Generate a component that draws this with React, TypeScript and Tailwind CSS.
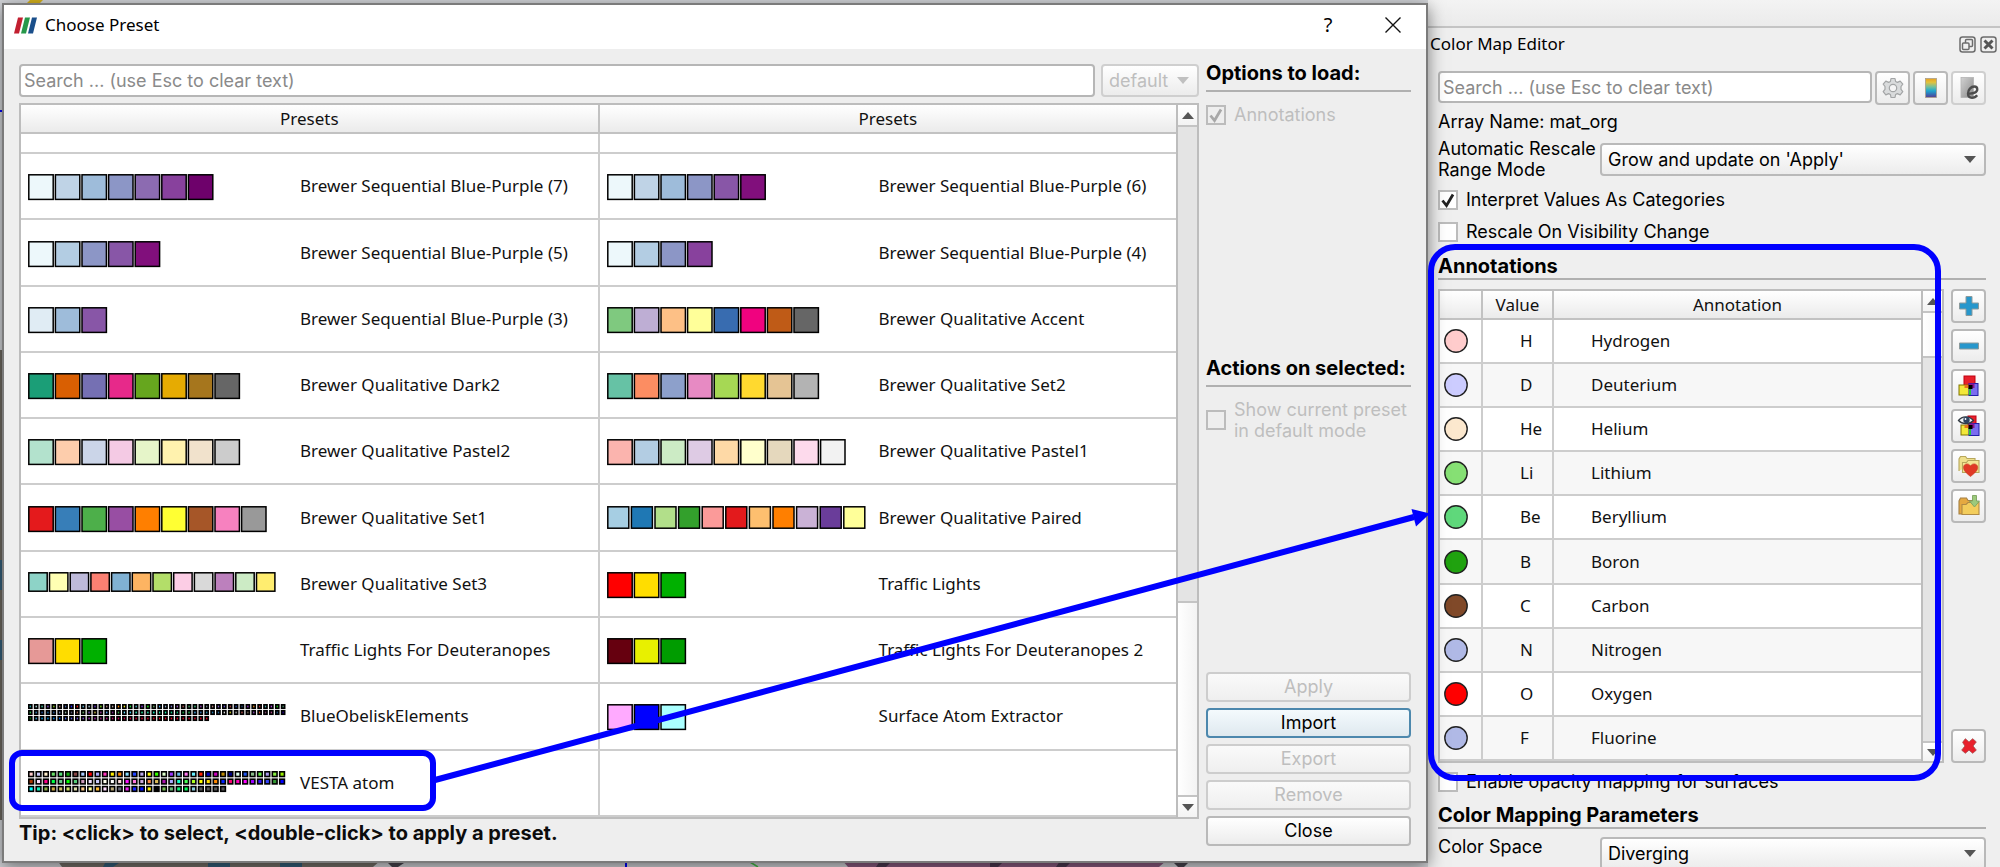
import React from "react";

type Palette = { colors: string[]; w: number; h: number; stepX: number; stepY?: number; perRow?: number; line?: number };
type Preset = { name: string; palette: Palette };

const large = (list: string): Palette => ({ colors: list.split(" "), w: 24.4, h: 24.6, stepX: 26.6 });
const sized = (list: string, w: number, h: number, stepX: number): Palette => ({ colors: list.split(" "), w, h, stepX });

const obelisk =
  "#2aa #bee #4ca #85c #8c2 #a77 #46a #22f #f22 #6bd #acd #63c #8e2 #b88 #a99 #f80 #ee2 #2e4 #5cd #83e #2f2 #6a6 #4ae #8ac #77c #a6c #a55 #4a6 #4c8 #94b #789 #a77 #86c #65c #b44 #35b #247 #93c #d82 #a33 #4aa #a4d #2c2 #486";
const obelisk2 =
  "#2b4 #38b #25a #16a #259 #78b #8a9 #557 #a65 #6a6 #84c #cb4 #939 #5af #728 #3a4 #6df #4df #3fc #2fa #2fb #1fc #2da #1ea #1c8 #1b7 #1a4 #2b5 #4ae #37b #28a #27a #269 #ddd #cc2 #aaa #b55 #765 #84a #c52 #746 #a48 #258 #208";
const obelisk3 =
  "#070 #3ad #0af #09e #08f #06e #46e #55d #75d #84d #a3c #a2b #a28 #b18 #b06 #c05 #c04 #d04 #d03 #e03 #e02 #e02 #e02 #e02 #e02 #e02 #e02 #e02 #e02 #e02 #e02";

const vesta =
  "#fcc #ccf #fec #6d6 #5d7 #1a1 #844 #acf #f00 #aaf #f3b #fe0 #f80 #8df #24f #bae #ff0 #3f0 #dfc #93f #6be #f7e #6ef #f20 #00c #c0b #b80 #008 #dfe #25e #8b8 #6e4 #a9e #8e4 #9e0" +
  " #a30 #fdf #f08 #0f4 #6c8 #0f0 #5c7 #c9b #edf #ccf #ffe #fff #fdd #f1f #f7d #cad #f84 #db5 #a1a #aaf #1fc #4f5 #af2 #ff0 #fd0 #f80 #02f #f07 #f0b #f0f #90f #31f #34f #393 #00f" +
  " #0ff #1eb #8a4 #ca4 #cb6 #cd6 #dda #fc8 #ff9 #fb3 #fdf #ba7 #667 #e2e #12f #01f #fe0 #000 #7b5 #6b7 #1e7 #0f5 #8cd #555 #555 #555 #555";

const obeliskPalette: Palette = {
  colors: `${obelisk} ${obelisk2} ${obelisk3}`.split(" "),
  w: 3, h: 3.4, stepX: 5.88, stepY: 6, perRow: 44, line: 1.7,
};
const vestaPalette: Palette = { colors: vesta.split(" "), w: 4.7, h: 4.7, stepX: 7.38, stepY: 7.4, perRow: 35, line: 1.6 };

const rows: [Preset, Preset | null][] = [
  [
    { name: "Brewer Sequential Blue-Purple (7)", palette: large("#edf8fb #bfd3e6 #9ebcda #8c96c6 #8c6bb1 #88419d #6e016b") },
    { name: "Brewer Sequential Blue-Purple (6)", palette: large("#edf8fb #bfd3e6 #9ebcda #8c96c6 #8856a7 #810f7c") },
  ],
  [
    { name: "Brewer Sequential Blue-Purple (5)", palette: large("#edf8fb #b3cde3 #8c96c6 #8856a7 #810f7c") },
    { name: "Brewer Sequential Blue-Purple (4)", palette: large("#edf8fb #b3cde3 #8c96c6 #88419d") },
  ],
  [
    { name: "Brewer Sequential Blue-Purple (3)", palette: large("#e0ecf4 #9ebcda #8856a7") },
    { name: "Brewer Qualitative Accent", palette: large("#7fc97f #beaed4 #fdc086 #ffff99 #386cb0 #f0027f #bf5b17 #666666") },
  ],
  [
    { name: "Brewer Qualitative Dark2", palette: large("#1b9e77 #d95f02 #7570b3 #e7298a #66a61e #e6ab02 #a6761d #666666") },
    { name: "Brewer Qualitative Set2", palette: large("#66c2a5 #fc8d62 #8da0cb #e78ac3 #a6d854 #ffd92f #e5c494 #b3b3b3") },
  ],
  [
    { name: "Brewer Qualitative Pastel2", palette: large("#b3e2cd #fdcdac #cbd5e8 #f4cae4 #e6f5c9 #fff2ae #f1e2cc #cccccc") },
    { name: "Brewer Qualitative Pastel1", palette: large("#fbb4ae #b3cde3 #ccebc5 #decbe4 #fed9a6 #ffffcc #e5d8bd #fddaec #f2f2f2") },
  ],
  [
    { name: "Brewer Qualitative Set1", palette: large("#e41a1c #377eb8 #4daf4a #984ea3 #ff7f00 #ffff33 #a65628 #f781bf #999999") },
    { name: "Brewer Qualitative Paired", palette: sized("#a6cee3 #1f78b4 #b2df8a #33a02c #fb9a99 #e31a1c #fdbf6f #ff7f00 #cab2d6 #6a3d9a #ffff99", 21, 21.4, 23.6) },
  ],
  [
    { name: "Brewer Qualitative Set3", palette: sized("#8dd3c7 #ffffb3 #bebada #fb8072 #80b1d3 #fdb462 #b3de69 #fccde5 #d9d9d9 #bc80bd #ccebc5 #ffed6f", 18.4, 18.4, 20.7) },
    { name: "Traffic Lights", palette: large("#ff0000 #ffdd00 #00b000") },
  ],
  [
    { name: "Traffic Lights For Deuteranopes", palette: large("#e69997 #ffdd00 #00b000") },
    { name: "Traffic Lights For Deuteranopes 2", palette: large("#66000f #e8f000 #009c00") },
  ],
  [
    { name: "BlueObeliskElements", palette: obeliskPalette },
    { name: "Surface Atom Extractor", palette: large("#ffaaff #0000ff #aaffff") },
  ],
  [{ name: "VESTA atom", palette: vestaPalette }, null],
];

const elements = [
  ["H", "Hydrogen", "#ffcccc"],
  ["D", "Deuterium", "#ccccff"],
  ["He", "Helium", "#fce8ce"],
  ["Li", "Lithium", "#86e074"],
  ["Be", "Beryllium", "#5fd87b"],
  ["B", "Boron", "#20a20f"],
  ["C", "Carbon", "#804929"],
  ["N", "Nitrogen", "#b0b9e6"],
  ["O", "Oxygen", "#ff0000"],
  ["F", "Fluorine", "#b0b9e6"],
];

const dense = "font-['Inter','Noto_Sans_CJK_KR',sans-serif] text-[18px]";
const heading = "font-['Inter','Noto_Sans_CJK_KR',sans-serif] text-[20px] font-bold";
const field = "rounded-[4px] border-2 border-[#b6b6b6] bg-white";
const raised = "rounded-[4px] border-2 border-[#b9b9b9] bg-linear-to-b from-white to-[#ececec]";

function Swatches({ palette }: { palette: Palette }) {
  const { colors, w, h, stepX, stepY = 0, perRow = 99, line = 1.5 } = palette;
  return (
    <svg width="262" height="28" className="block" aria-hidden="true">
      {colors.map((c, i) => (
        <rect
          key={i}
          x={0.8 + (i % perRow) * stepX}
          y={0.8 + Math.floor(i / perRow) * stepY}
          width={w}
          height={h}
          fill={c}
          stroke="#000"
          strokeWidth={line}
        />
      ))}
    </svg>
  );
}

function PresetCell({ preset, last }: { preset: Preset | null; last?: boolean }) {
  return (
    <td className={`h-[66px] border-b-2 border-[#cdcdcd] p-0 ${last ? "" : "border-r-2"}`}>
      {preset && (
        <div className="flex h-[64px] items-center pl-[7px]">
          <div className="w-[272px] self-start pt-[20px]">
            <Swatches palette={preset.palette} />
          </div>
          <span className="whitespace-nowrap">{preset.name}</span>
        </div>
      )}
    </td>
  );
}

function Arrow({ up, className = "" }: { up?: boolean; className?: string }) {
  return (
    <svg viewBox="0 0 12 7" className={`h-[7px] w-[12px] ${className}`} aria-hidden="true">
      <path d={up ? "M0 7 6 0l6 7z" : "M0 0h12L6 7z"} fill="currentColor" />
    </svg>
  );
}

function ScrollBar({ thumb }: { thumb: "top" | "bottom" }) {
  const cap = "flex h-[20px] shrink-0 items-center justify-center bg-linear-to-b from-white to-[#f3f3f3] text-[#555]";
  const bar = <div className={`border-y-2 border-[#c4c4c4] bg-linear-to-r from-white to-[#f3f3f3] ${thumb === "top" ? "h-[47px]" : "h-[196px]"}`} />;
  return (
    <div className="flex w-[21px] shrink-0 flex-col border-l-2 border-[#bdbdbd] bg-[#e4e4e4]">
      <div className={cap}><Arrow up /></div>
      {thumb === "top" && bar}
      <div className={`flex-1 ${thumb === "top" ? "" : "border-t-2 border-[#c4c4c4]"}`} />
      {thumb === "bottom" && bar}
      <div className={`${cap} ${thumb === "top" ? "border-t-2 border-[#c4c4c4]" : ""}`}><Arrow /></div>
    </div>
  );
}

function Check({ label, checked, disabled, multiline }: { label: React.ReactNode; checked?: boolean; disabled?: boolean; multiline?: boolean }) {
  return (
    <label className={`flex items-center gap-2 whitespace-nowrap ${dense} ${multiline ? "leading-[21px]" : "h-[20px] leading-[20px]"} ${disabled ? "text-[#bebebe]" : "text-black"}`}>
      <span className="relative block size-[20px] shrink-0">
        <input
          type="checkbox"
          defaultChecked={checked}
          disabled={disabled}
          className={`block size-[20px] appearance-none border-2 border-[#bcbcbc] ${disabled ? "bg-[#eee]" : "bg-white"}`}
        />
        {checked && (
          <svg viewBox="0 0 20 20" className="pointer-events-none absolute inset-0 size-[20px]" aria-hidden="true">
            <path d="M4.5 10.5 8.5 15.500 15 4.500" fill="none" stroke={disabled ? "#a8a8a8" : "#222"} strokeWidth="2.800" />
          </svg>
        )}
      </span>
      <span>{label}</span>
    </label>
  );
}

function Select({ id, value, label, disabled, className = "" }: { id: string; value: string; label?: string; disabled?: boolean; className?: string }) {
  return (
    <div className={`relative ${className}`}>
      <select
        id={id}
        aria-label={label}
        disabled={disabled}
        className={`block h-[33px] w-full appearance-none pl-[6px] ${raised} ${dense} ${disabled ? "border-[#cfcfcf] text-[#bebebe] opacity-100" : "text-black"}`}
      >
        <option>{value}</option>
      </select>
      <Arrow className={`pointer-events-none absolute top-[13px] right-[10px] ${disabled ? "text-[#c0c0c0]" : "text-[#555]"}`} />
    </div>
  );
}

function Section({ children, roomy }: { children: React.ReactNode; roomy?: boolean }) {
  return (
    <h2 className={`border-b-2 border-[#b0b0b0] leading-[24px] whitespace-nowrap text-black ${roomy ? "pb-[5px]" : ""} ${heading}`}>{children}</h2>
  );
}

function DialogButton({ children, disabled, focus }: { children: string; disabled?: boolean; focus?: boolean }) {
  return (
    <button
      type="button"
      disabled={disabled}
      className={`h-[30px] w-full rounded-[4px] border-2 leading-[24px] ${dense} ${
        focus
          ? "border-[#4d88ad] bg-linear-to-b from-[#f4fafd] to-[#dfe9ef] text-black"
          : disabled
            ? "border-[#cdcdcd] bg-linear-to-b from-[#fafafa] to-[#efefef] text-[#bebebe]"
            : "border-[#b9b9b9] bg-linear-to-b from-white to-[#ececec] text-black"
      }`}
    >
      {children}
    </button>
  );
}

function IconButton({ label, children, faded }: { label: string; children: React.ReactNode; faded?: boolean }) {
  return (
    <button type="button" aria-label={label} className={`flex h-[34px] w-[35px] shrink-0 items-center justify-center ${raised} ${faded ? "border-[#cfcfcf]" : ""}`}>
      {children}
    </button>
  );
}

function GearIcon() {
  return (
    <svg viewBox="0 0 24 24" className="size-[24px]">
      <g fill="#d9dbdc" stroke="#a3a5a6" strokeWidth="1.200" strokeLinejoin="round">
        <path d="M10 2.500h4l.6 3 1.800.9 2.800-1.300 2.600 3-1.800 2.400v2.800l1.800 2.400-2.600 3.200-2.900-1.300-1.700.9-.6 3h-4l-.6-3-1.800-.9-2.800 1.300-2.600-3.200L4 13.300v-2.800L2.200 8.100l2.600-3 2.900 1.300 1.700-.9z" />
        <circle cx="12" cy="12" r="3.700" fill="#f5f5f5" />
      </g>
    </svg>
  );
}

function ColorBarIcon() {
  return (
    <svg viewBox="0 0 24 24" className="size-[24px]">
      <defs>
        <linearGradient id="bar" x1="0" y1="0" x2="0" y2="1">
          <stop offset="0" stopColor="#e8a020" /><stop offset=".2" stopColor="#e3c23c" />
          <stop offset=".45" stopColor="#6fc0a0" /><stop offset=".65" stopColor="#1fa6cf" />
          <stop offset=".85" stopColor="#3868b0" /><stop offset="1" stopColor="#5c3c90" />
        </linearGradient>
      </defs>
      <rect x="6.500" y="2.500" width="11" height="19" fill="url(#bar)" stroke="#aaa08a" strokeWidth=".8" />
    </svg>
  );
}

function EditDefaultsIcon() {
  return (
    <svg viewBox="0 0 24 24" className="size-[24px]">
      <defs>
        <linearGradient id="grey" x1="0" y1="0" x2="1" y2="1">
          <stop offset="0" stopColor="#d2d2d2" /><stop offset="1" stopColor="#8a8a8a" />
        </linearGradient>
      </defs>
      <rect x="4" y="1.500" width="12.500" height="20" fill="url(#grey)" stroke="#b4b4b4" strokeWidth=".8" />
      <path d="M11.500 17.500c5 .3 8.800-1.200 8.800-4.300 0-1.700-1.100-2.700-3-2.700-3.400 0-6.300 3.300-6.300 7 0 2.700 1.500 4.300 4 4.300 2.200 0 4-1 5.200-2.600" fill="none" stroke="#4c4c4c" strokeWidth="2.300" />
    </svg>
  );
}

function Squares({ eye }: { eye?: boolean }) {
  return (
    <svg viewBox="0 0 24 24" className="size-[24px]">
      <rect x={eye ? 11 : 7} y="2" width={eye ? 8 : 11} height="12" fill="#e8202c" stroke="#c00010" />
      <rect x={eye ? 4 : 2} y="11" width="11" height="10" fill="#f2e838" stroke="#807400" />
      <rect x="12" y="9.500" width={eye ? 10 : 9} height="12" fill="#7a6cf0" stroke="#2020a8" />
      <path d="M12 14h2v7h-2z" fill="#22c83c" />
      <path d="M12 9.500h5.500V14H12z" fill="#8c1490" />
      <path d="M7.500 11h5v3h-5z" fill="#e87818" />
      <path d="M11.500 11h4v4h-4z" fill="#000" />
      {eye && (
        <g>
          <path d="M1.500 6.500C5 1.800 12 1.400 16.500 6.500c-4 4-11 4.300-15 0z" fill="#eef2f5" stroke="#333b42" strokeWidth="1.300" />
          <circle cx="9.500" cy="6" r="3.200" fill="#2c4360" />
          <circle cx="8.500" cy="5" r=".9" fill="#fff" />
        </g>
      )}
    </svg>
  );
}

function HeartFolder() {
  return (
    <svg viewBox="0 0 24 24" className="size-[24px]">
      <path d="M2 17V5l1.500-2.500h5L10 4.500h8V8" fill="#efe08c" stroke="#b7a75c" strokeWidth="1.100" />
      <path d="M5.500 18.500V8.500h4l1.500-2h11v12z" fill="#f4e795" stroke="#b7a75c" strokeWidth="1.100" />
      <path d="M13.500 22.500C9 19 6.500 16.400 6.500 13.400c0-4 5.200-4.800 7-1.300 1.800-3.500 7.200-2.700 7.200 1.300 0 3-2.700 5.600-7.200 9.100z" fill="#e03a26" stroke="#c33a22" strokeWidth=".6" />
    </svg>
  );
}

function SaveFolder() {
  return (
    <svg viewBox="0 0 24 24" className="size-[24px]">
      <path d="M2 20V7l1.500-3h6L11 6.500h7V20z" fill="#e5a940" stroke="#a58045" strokeWidth="1.100" />
      <path d="M5 20.500V10.500h4l2-2h11v12z" fill="#f3cd5c" stroke="#b08a45" strokeWidth="1.100" />
      <path d="M15.500 1.500h4v5.500h3l-5 6-5-6h3z" fill="#9cc97c" stroke="#7ca35f" strokeWidth=".9" />
    </svg>
  );
}

function PresetDialog() {
  const th = "h-[29px] border-b-2 border-[#c2c2c2] bg-linear-to-b from-white to-[#ebebeb] p-0 font-normal";
  return (
    <section className="flex min-w-0 flex-1 flex-col border-2 border-[#7b7b7b] bg-[#eee] shadow-[0_4px_16px_rgba(0,0,0,0.5)]">
      <header className="flex h-[44px] shrink-0 items-center bg-white pr-[25px] pb-[4px] pl-[10px] text-black">
        <svg viewBox="0 0 23 16" className="mr-2 h-[17px] w-[23px]" aria-hidden="true">
          <path d="M4 0h5L5 16H0z" fill="#c21f30" />
          <path d="M11 0h5l-4 16H7z" fill="#27984a" />
          <path d="M18 0h5l-4 16h-5z" fill="#1a4f8b" />
        </svg>
        <h1 className="flex-1 text-[17px]">Choose Preset</h1>
        <button type="button" aria-label="Help" className="w-[20px] text-[20px]">?</button>
        <button type="button" aria-label="Close dialog" className="ml-[47px]">
          <svg viewBox="0 0 16 16" className="size-[16px]">
            <path d="M.5.5l15 15M15.500.5l-15 15" stroke="#111" strokeWidth="1.400" />
          </svg>
        </button>
      </header>
      <div className="flex min-h-0 flex-1 gap-[7px] px-[15px] pt-[15px] pb-[15px]">
        <div className="flex min-w-0 flex-1 flex-col">
          <div className="flex gap-[6px]">
            <input aria-label="Search presets" placeholder="Search ... (use Esc to clear text)" className={`h-[33px] min-w-0 flex-1 px-[3px] text-black placeholder:text-[#8a8a8a] ${field} ${dense}`} />
            <Select id="mode" label="Preset mode" value="default" disabled className="w-[98px]" />
          </div>
          <div className="mt-[6px] flex flex-1 border-2 border-[#bdbdbd] bg-white">
            <table className="flex-1 table-fixed border-separate border-spacing-0 text-[17px] leading-[24px]">
              <colgroup><col /><col /></colgroup>
              <thead>
                <tr>
                  <th className={`${th} border-r-2`}>Presets</th>
                  <th className={th}>Presets</th>
                </tr>
              </thead>
              <tbody>
                <tr>
                  <td className="h-[20px] border-r-2 border-b-2 border-[#cdcdcd] p-0" />
                  <td className="h-[20px] border-b-2 border-[#cdcdcd] p-0" />
                </tr>
                {rows.map(([a, b]) => (
                  <tr key={a.name}>
                    <PresetCell preset={a} />
                    <PresetCell preset={b} last />
                  </tr>
                ))}
              </tbody>
            </table>
            <ScrollBar thumb="bottom" />
          </div>
          <p className={`mt-[3px] pb-[2px] leading-[22px] text-[#0c0c0c] ${heading}`}>Tip: &lt;click&gt; to select, &lt;double-click&gt; to apply a preset.</p>
        </div>
        <aside className="flex w-[205px] shrink-0 flex-col">
          <div className="-mt-[3px]"><Section roomy>Options to load:</Section></div>
          <div className="mt-[13px]"><Check label="Annotations" checked disabled /></div>
          <div className="mt-[231px]"><Section roomy>Actions on selected:</Section></div>
          <div className="mt-[12px]"><Check multiline disabled label={<>Show current preset<br />in default mode</>} /></div>
          <div className="mt-auto flex flex-col gap-[6px]">
            <DialogButton disabled>Apply</DialogButton>
            <DialogButton focus>Import</DialogButton>
            <DialogButton disabled>Export</DialogButton>
            <DialogButton disabled>Remove</DialogButton>
            <DialogButton>Close</DialogButton>
          </div>
        </aside>
      </div>
    </section>
  );
}

function AnnotationTable() {
  const th = "h-[29px] border-b-2 border-[#c2c2c2] bg-linear-to-b from-white to-[#ebebeb] p-0 font-normal";
  return (
    <div className="flex h-[474px] min-w-0 flex-1 border-2 border-[#bdbdbd] bg-white">
      <table className="flex-1 table-fixed border-separate border-spacing-0 text-[17px] leading-[24px]">
        <colgroup><col className="w-[43px]" /><col className="w-[71px]" /><col /></colgroup>
        <thead>
          <tr>
            <th className={`${th} border-r-2`} aria-label="Color" />
            <th className={`${th} border-r-2`}>Value</th>
            <th className={th}>Annotation</th>
          </tr>
        </thead>
        <tbody>
          {elements.map(([symbol, name, color], i) => {
            const td = `h-[44px] border-b-2 border-[#cdcdcd] p-0 ${i % 2 ? "bg-[#f7f7f7]" : "bg-white"}`;
            return (
              <tr key={symbol}>
                <td className={`${td} border-r-2`}>
                  <svg viewBox="0 0 24 24" className="ml-[4px] block size-[24px]" aria-hidden="true">
                    <circle cx="12" cy="12" r="11.200" fill={color} stroke="#222" strokeWidth="1.400" />
                  </svg>
                </td>
                <td className={`${td} border-r-2 pl-[37px]`}>{symbol}</td>
                <td className={`${td} pl-[37px]`}>{name}</td>
              </tr>
            );
          })}
        </tbody>
      </table>
      <ScrollBar thumb="top" />
    </div>
  );
}

function ColorMapEditor() {
  return (
    <section className="relative z-0 w-[572px] shrink-0 bg-[#efefef]">
      <div className="h-[28px] border-b-2 border-[#c4c4c4] bg-linear-to-b from-[#f3f3f3] to-[#ebebeb]" />
      <header className="flex h-[32px] items-center gap-[4px] pr-[3px] pl-[2px] text-black">
        <h1 className="flex-1 text-[17px]">Color Map Editor</h1>
        <button type="button" aria-label="Float">
          <svg viewBox="0 0 17 17" className="size-[17px]" fill="none" stroke="#6c6c6c" strokeWidth="1.500">
            <rect x="1" y="1" width="15" height="15" rx="2.500" />
            <rect x="6.500" y="3.500" width="7" height="7" rx="1" />
            <rect x="3.500" y="7" width="6.500" height="6.500" rx="1" fill="#efefef" />
          </svg>
        </button>
        <button type="button" aria-label="Close editor">
          <svg viewBox="0 0 17 17" className="size-[17px]" fill="none" stroke="#6c6c6c" strokeWidth="1.500">
            <rect x="1" y="1" width="15" height="15" rx="2.500" />
            <path d="M4.500 4.500l8 8M12.500 4.500l-8 8" stroke="#555" strokeWidth="3" />
          </svg>
        </button>
      </header>
      <div className="pt-[11px] pr-[14px] pl-[10px]">
        <div className="flex gap-[3px]">
          <input aria-label="Search properties" placeholder="Search ... (use Esc to clear text)" className={`h-[32px] min-w-0 flex-1 px-[3px] text-black placeholder:text-[#8a8a8a] ${field} ${dense}`} />
          <IconButton label="Advanced properties"><GearIcon /></IconButton>
          <IconButton label="Color legend"><ColorBarIcon /></IconButton>
          <IconButton label="Edit default colors" faded><EditDefaultsIcon /></IconButton>
        </div>
        <p className={`mt-[5px] leading-[24px] text-black ${dense}`}>Array Name: mat_org</p>
        <div className="mt-[4px] flex items-center gap-2 text-black">
          <label htmlFor="rescale" className={`w-[154px] shrink-0 leading-[21px] whitespace-nowrap ${dense}`}>Automatic Rescale<br />Range Mode</label>
          <Select id="rescale" value="Grow and update on 'Apply'" className="flex-1" />
        </div>
        <div className="mt-[10px]"><Check label="Interpret Values As Categories" checked /></div>
        <div className="mt-[12px]"><Check label="Rescale On Visibility Change" /></div>
        <div className="mt-[12px]"><Section>Annotations</Section></div>
        <div className="mt-[9px] flex gap-[7px]">
          <AnnotationTable />
          <div className="flex flex-col gap-[6px]">
            <IconButton label="Add annotation">
              <svg viewBox="0 0 24 24" className="size-[24px]"><path d="M9 2.500h6V9h6.500v6H15v6.500H9V15H2.500V9H9z" fill="#2797cc" stroke="#8b9a9c" strokeWidth="1" /></svg>
            </IconButton>
            <IconButton label="Remove annotation">
              <svg viewBox="0 0 24 24" className="size-[24px]"><path d="M2.500 9h19v6h-19z" fill="#2797cc" stroke="#8b9a9c" strokeWidth="1" /></svg>
            </IconButton>
            <IconButton label="Add active values"><Squares /></IconButton>
            <IconButton label="Add visible values"><Squares eye /></IconButton>
            <IconButton label="Choose preset"><HeartFolder /></IconButton>
            <IconButton label="Save as preset"><SaveFolder /></IconButton>
            <div className="flex-1" />
            <IconButton label="Delete all annotations">
              <svg viewBox="0 0 24 24" className="size-[22px]"><path d="M5 8l3-4 4 3.500L16 4l4 3.500-3.500 4.500 3.500 4.500-4 3.500-4-3.500L8 20l-4-3.500L7.500 12z" fill="#e8202c" stroke="#a04a4a" strokeWidth=".8" /></svg>
            </IconButton>
          </div>
        </div>
        <div className="mt-[9px]"><Check label="Enable opacity mapping for surfaces" /></div>
        <div className="mt-[11px]"><Section>Color Mapping Parameters</Section></div>
        <div className="mt-[8px] flex gap-2 text-black">
          <label htmlFor="space" className={`w-[154px] shrink-0 leading-[20px] ${dense}`}>Color Space</label>
          <Select id="space" value="Diverging" className="flex-1" />
        </div>
      </div>
    </section>
  );
}

function Backdrop() {
  return (
    <svg viewBox="0 0 2000 867" preserveAspectRatio="none" className="absolute inset-0 h-full w-full" aria-hidden="true">
      <rect width="2000" height="867" fill="#d4d6da" />
      <path d="M30 0h13l-5 5H25z" fill="#d6b21c" />
      <rect y="350" width="4" height="470" fill="#6f6a62" />
      <path d="M0 560h4v30H0zM0 640h4v20H0z" fill="#35607c" />
      <path d="M0 110h4v2H0z" fill="#0000ff" />
      <path d="M57 860h324l-8 7H62z" fill="#77716a" />
      <path d="M105 863h14l-6 4h-10zM208 861h22v6h-22zM280 861h22v6h-22z" fill="#35607c" />
      <path d="M625 860h2v7h-2z" fill="#0000ff" />
      <path d="M750 862l8 5" stroke="#48c048" strokeWidth="1.500" />
      <path d="M842 860h325l-8 7H848z" fill="#8d5c82" />
      <path d="M880 861h12l-6 6h-10zM990 861h14l-6 6h-8zM1060 861h12l-6 6h-10z" fill="#4d3850" />
      <path d="M388 863h16l-6 4h-6zM1174 863h14l-4 4h-6z" fill="#4b4650" />
    </svg>
  );
}

function Callouts() {
  return (
    <svg viewBox="0 0 2000 867" preserveAspectRatio="none" className="pointer-events-none absolute inset-0 z-20 h-full w-full" aria-hidden="true">
      <g fill="none" stroke="#0000ff" strokeWidth="6">
        <rect x="12" y="753" width="421" height="55" rx="10" />
        <rect x="1431" y="247" width="507" height="531" rx="24" />
        <path d="M435 780 1414 517" />
      </g>
      <path d="M1430 513.500 1411.500 509l4.500 17.500z" fill="#0000ff" />
    </svg>
  );
}

export default function App() {
  return (
    <main className="relative flex h-screen min-h-[867px] overflow-hidden bg-[#d4d6da] font-['Noto_Sans','Noto_Sans_CJK_KR',sans-serif] text-[#111]">
      <Backdrop />
      <div className="z-10 flex min-w-0 flex-1 pt-[3px] pb-[4px] pl-[2px]">
        <PresetDialog />
      </div>
      <ColorMapEditor />
      <Callouts />
    </main>
  );
}
